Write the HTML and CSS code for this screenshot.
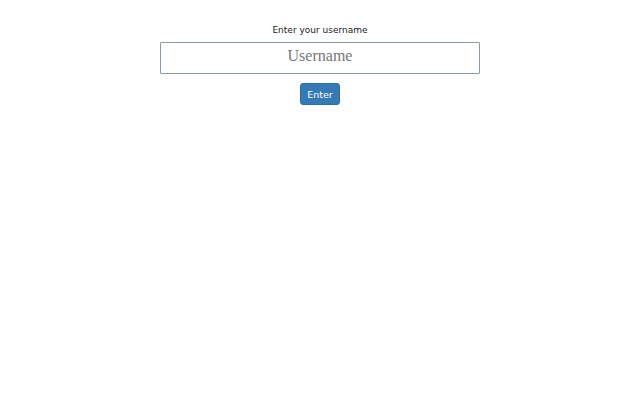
FILE: index.html
```html
<!DOCTYPE html>
<html>
<head>
<meta charset="utf-8">
<link rel="stylesheet" href="styles.css">
</head>
<body>
<div class="login">
  <label class="label" for="u">Enter your username</label>
  <input id="u" class="field" type="text" placeholder="Username">
  <button class="btn">Enter</button>
</div>
</body>
</html>
```
FILE: styles.css
```css
html, body { margin: 0; padding: 0; background: #fff; }
.login {
  display: flex;
  flex-direction: column;
  align-items: center;
  padding-top: 23px;
  font-family: "DejaVu Sans", sans-serif;
}
.label {
  font-size: 9px;
  color: #222;
  line-height: 14px;
  margin-bottom: 5px;
}
.field {
  box-sizing: border-box;
  width: 320px;
  height: 32px;
  border: 1px solid #8a9aa6;
  border-radius: 1px;
  font-family: "Liberation Serif", serif;
  font-size: 16px;
  line-height: 24px;
  text-align: center;
  padding: 0 0 4px 0;
  margin: 0 0 9px 0;
  color: #333;
}
.field::placeholder { color: #777; }
.btn {
  box-sizing: border-box;
  width: 40px;
  height: 22px;
  background: #337ab7;
  border: 1px solid #2e6da4;
  border-radius: 3px;
  color: #fff;
  font-family: "DejaVu Sans", sans-serif;
  font-size: 9.5px;
  padding: 0;
}
```
